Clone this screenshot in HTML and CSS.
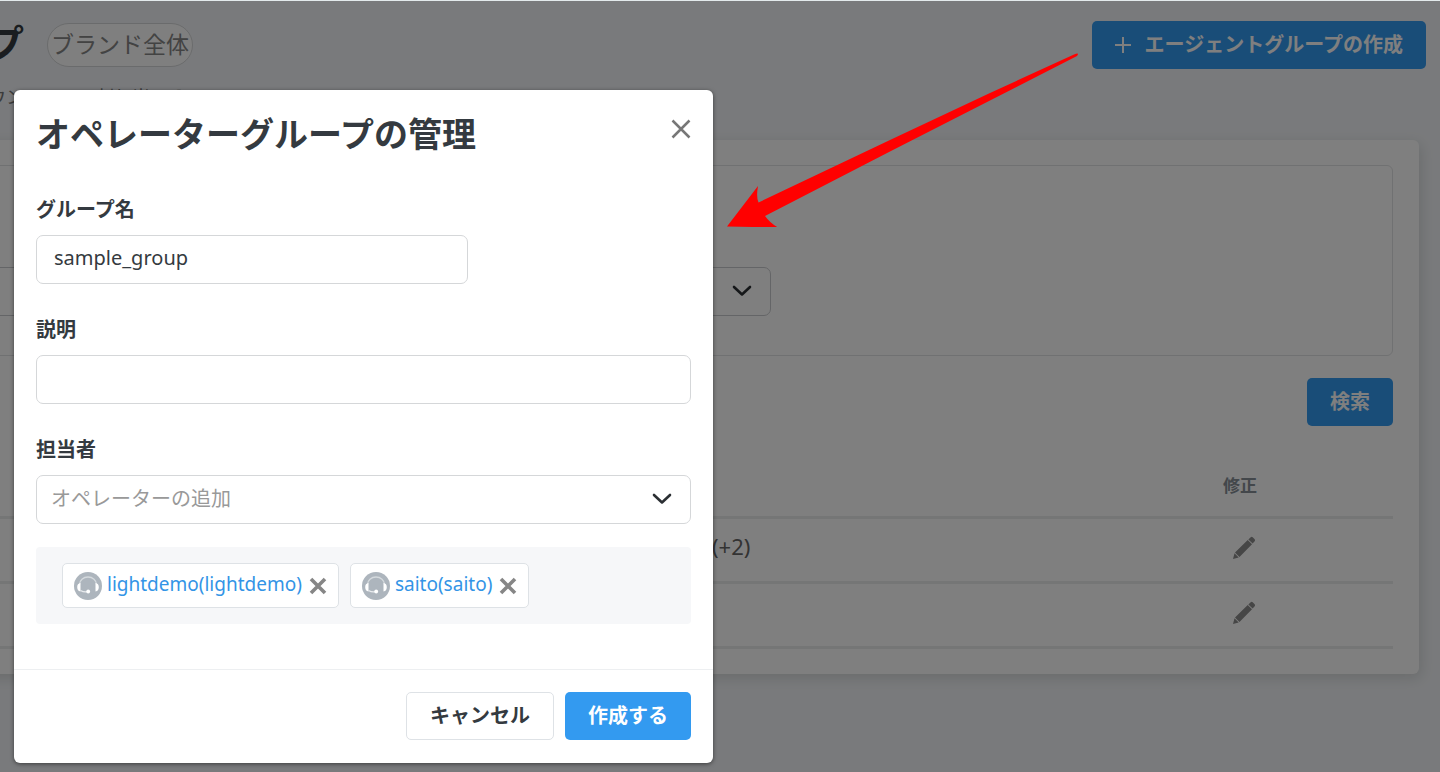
FILE: index.html
```html
<!DOCTYPE html>
<html lang="ja">
<head>
<meta charset="utf-8">
<title>オペレーターグループの管理</title>
<link rel="stylesheet" href="styles.css">
</head>
<body>
<svg class="sprite" aria-hidden="true">
  <symbol id="chevron" viewBox="0 0 20 12"><path d="M2 2l8 7.500 8-7.500" fill="none" stroke="#2b2f33" stroke-width="2.600" stroke-linecap="round" stroke-linejoin="round"/></symbol>
  <symbol id="headset" viewBox="0 0 28 28">
    <circle cx="14" cy="14" r="14" fill="#adb5bd"/>
    <path d="M5.500 12.500a8.500 7.500 0 0 1 17 0" fill="none" stroke="#d5dade" stroke-width="1.300"/>
    <path d="M6.500 11v8.500C4.300 19.300 3.200 17.500 3.200 15.200s1.100-4 3.300-4.200zM21.500 11v8.500c2.200-.2 3.300-2 3.300-4.300s-1.100-4-3.300-4.200z" fill="#fff"/>
    <path d="M6.500 18.500q3.500 2 7 1.200" fill="none" stroke="#e9ecef" stroke-width="1.300"/>
    <circle cx="14.200" cy="19.500" r="1.900" fill="#fff"/>
  </symbol>
  <symbol id="remove" viewBox="0 0 18 18"><path d="M2 2l14 14M16 2L2 16" stroke="#868686" stroke-width="3.600" fill="none"/></symbol>
  <symbol id="pencil" viewBox="0 0 24 24"><path d="M1 23l1.500-5.700L6.700 21.500zM3 16.500L15.700 4l4.300 4.300L7.500 21zM16.400 3.400L18.700 1.200q1-.8 2 .1l2 2q.8 1 0 2l-2.100 2.300z" fill="#8c8c8c"/></symbol>
</svg>

<main class="page">
  <header class="page-head">
    <h1 class="page-title">プ</h1>
    <span class="brand-tag">ブランド全体</span>
    <button class="btn btn-primary btn-create" type="button">
      <svg class="plus" viewBox="0 0 16 16" aria-hidden="true"><path d="M8 0v16M0 8h16" stroke="#fff" stroke-width="2"/></svg>
      エージェントグループの作成
    </button>
  </header>
  <p class="page-desc">ウントにのみ割り当てるエージェント</p>

  <section class="card">
    <div class="filter">
      <div class="select-wrap filter-select">
        <select class="control" aria-label="グループ"><option></option></select>
        <svg class="chevron" aria-hidden="true"><use href="#chevron"/></svg>
      </div>
    </div>
    <div class="search-row"><button class="btn btn-primary" type="button">検索</button></div>
    <table class="groups">
      <thead><tr><th></th><th class="col-edit">修正</th></tr></thead>
      <tbody>
        <tr><td class="col-member">(+2)</td><td class="col-edit"><button class="icon-btn" type="button" aria-label="修正"><svg class="pencil"><use href="#pencil"/></svg></button></td></tr>
        <tr><td class="col-member"></td><td class="col-edit"><button class="icon-btn" type="button" aria-label="修正"><svg class="pencil"><use href="#pencil"/></svg></button></td></tr>
      </tbody>
    </table>
  </section>
</main>

<div class="backdrop"></div>

<form class="modal" role="dialog" aria-labelledby="modal-title">
  <div class="modal-body">
    <div class="modal-head">
      <h2 class="modal-title" id="modal-title">オペレーターグループの管理</h2>
      <button class="icon-btn" type="button" aria-label="閉じる"><svg class="close" viewBox="0 0 20 20"><path d="M1.500 1.500l17 17M18.500 1.500l-17 17" stroke="#777" stroke-width="2.500" fill="none"/></svg></button>
    </div>
    <div class="field">
      <label for="group-name">グループ名</label>
      <input class="control control-short" id="group-name" type="text" value="sample_group">
    </div>
    <div class="field">
      <label for="group-desc">説明</label>
      <input class="control" id="group-desc" type="text">
    </div>
    <div class="field">
      <label for="group-member">担当者</label>
      <div class="select-wrap">
        <select class="control placeholder" id="group-member"><option>オペレーターの追加</option></select>
        <svg class="chevron" aria-hidden="true"><use href="#chevron"/></svg>
      </div>
    </div>
    <div class="chips">
      <div class="chip"><svg class="avatar" aria-hidden="true"><use href="#headset"/></svg><span class="chip-name">lightdemo(lightdemo)</span><button class="icon-btn" type="button" aria-label="lightdemoを削除"><svg class="remove"><use href="#remove"/></svg></button></div>
      <div class="chip"><svg class="avatar" aria-hidden="true"><use href="#headset"/></svg><span class="chip-name">saito(saito)</span><button class="icon-btn" type="button" aria-label="saitoを削除"><svg class="remove"><use href="#remove"/></svg></button></div>
    </div>
  </div>
  <footer class="modal-foot">
    <button class="btn btn-outline" type="button">キャンセル</button>
    <button class="btn btn-primary" type="submit">作成する</button>
  </footer>
</form>

<svg class="arrow" viewBox="0 0 352 175" aria-hidden="true"><path d="M0 174.500L31 134Q29 145 31.500 150.500L163 88L263 41L347 2.500Q353 0 350 4L263 48.500L163 99.500L38 164Q43 171 51 175.500Z" fill="#f00"/></svg>
</body>
</html>
```
FILE: styles.css
```css
* { box-sizing: border-box; }

body {
  margin: 0;
  min-height: 100vh;
  overflow: hidden;
  position: relative;
  border-top: 1px solid #e3eaec;
  background: #f3f5f8;
  color: #343a40;
  font: 20px/30px "Noto Sans", "Noto Sans CJK JP", sans-serif;
}

h1, h2, p { margin: 0; }
button, input, select { font: inherit; color: inherit; }
svg { display: block; }
.sprite { position: absolute; width: 0; height: 0; }

.btn {
  display: inline-flex;
  align-items: center;
  justify-content: center;
  height: 48px;
  padding: 0 23px 1px;
  border: 0;
  border-radius: 5px;
  font-weight: 700;
  white-space: nowrap;
}
.btn-primary { background: #339af0; color: #fff; }
.btn-outline { background: #fff; border: 1px solid #dee2e6; }
.icon-btn { padding: 0; border: 0; background: none; }

.control {
  display: block;
  width: 100%;
  height: 49px;
  padding: 0 17px 4px;
  border: 1px solid #d5d7d9;
  border-radius: 7px;
  background: #fff;
}
select.control { appearance: none; padding: 0 14px 2px; }
.placeholder { color: #999; }
.control-short { width: 432px; }
.select-wrap { position: relative; }
.chevron {
  position: absolute;
  top: 18px;
  right: 19px;
  width: 20px;
  height: 12px;
}

.page-head {
  display: flex;
  align-items: center;
  height: 88px;
  padding-right: 14px;
}
.page-title {
  margin: 0 23px 6px -14px;
  font-size: 38px;
  line-height: 48px;
  color: #343a40;
}
.brand-tag {
  height: 44px;
  padding: 0 3px;
  border: 1px solid #d5d7d9;
  border-radius: 22px;
  background: #fff;
  color: #868686;
  font-size: 23px;
  line-height: 40px;
}
.btn-create { margin-left: auto; gap: 14px; }
.plus { width: 16px; height: 16px; }
.page-desc {
  margin: -7px 0 0 -12px;
  color: #777;
  font-size: 18px;
  white-space: nowrap;
}

.card {
  margin: 28px 21px 0 -40px;
  padding: 25px 26px;
  border-radius: 6px;
  background: #fff;
  box-shadow: 2px 4px 14px rgba(30, 45, 30, .14);
}
.filter {
  height: 191px;
  padding-top: 101px;
  border: 1px solid #e1e2e4;
  border-radius: 6px;
}
.filter-select { width: 784px; }
.filter-select .control { border-color: #c9cbce; }
.search-row { display: flex; justify-content: flex-end; padding: 22px 0 29px; }

.groups { width: 100%; border-collapse: collapse; table-layout: fixed; }
.groups th, .groups td { height: 65px; padding: 0 0 7px; border-bottom: 3px solid #ebeced; }
.groups th { height: 62px; padding: 2px 0 0; color: #868e96; font-size: 17px; }
.groups .col-edit { width: 306px; text-align: center; }
.groups td.col-edit { padding-left: 7px; }
.groups .col-member { padding-left: 726px; color: #666; font-size: 22px; text-align: left; }
.groups .icon-btn { vertical-align: middle; }
.pencil { width: 24px; height: 24px; }

.backdrop { position: absolute; inset: 0; background: rgba(0, 0, 0, .5); }

.modal {
  position: absolute;
  top: 89px;
  left: 14px;
  width: 699px;
  border-radius: 6px;
  background: #fff;
  box-shadow: 0 1px 4px rgba(0, 0, 0, .5);
}
.modal-body { padding: 20px 22px 45px; }
.modal-head {
  display: flex;
  align-items: center;
  justify-content: space-between;
  margin-bottom: 35px;
}
.modal-title { font-size: 34px; line-height: 48px; }
.modal-head .icon-btn { padding: 0 0 10px; }
.close { width: 20px; height: 20px; }
.field { margin-bottom: 29px; }
.field label { display: block; margin-bottom: 9px; font-weight: 700; line-height: 33px; }
.chips {
  display: flex;
  gap: 11px;
  margin-top: -6px;
  padding: 16px 26px;
  border-radius: 4px;
  background: #f6f7f9;
}
.chip {
  display: flex;
  align-items: center;
  height: 45px;
  padding: 0 11px;
  border: 1px solid #dee2e6;
  border-radius: 5px;
  background: #fff;
}
.avatar { width: 28px; height: 28px; margin-right: 5px; }
.chip-name { margin-right: 7px; padding-bottom: 3px; color: #3394e6; font-size: 19px; }
.remove { width: 18px; height: 18px; }
.modal-foot {
  display: flex;
  justify-content: flex-end;
  gap: 11px;
  padding: 22px 22px 23px;
  border-top: 1px solid #edeff1;
}

.arrow { position: absolute; top: 51px; left: 727px; width: 352px; height: 175px; }
```
